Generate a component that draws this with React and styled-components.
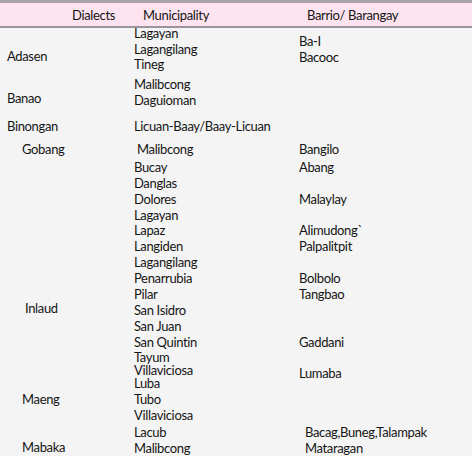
import React from "react";
import styled, { createGlobalStyle } from "styled-components";

const Global = createGlobalStyle`
  html, body { margin: 0; padding: 0; background: #ffffff; }
  body { font-family: Lato, "Open Sans", sans-serif; }
`;

const Table = styled.div`
  width: 472px;
  height: 456px;
  background: #f4f4f4;
  font-family: Lato, "Noto Sans", sans-serif;
  font-size: 13px;
  letter-spacing: -0.35px;
  color: #141414;
  overflow: hidden;
`;

const Header = styled.div`
  display: grid;
  grid-template-columns: 134px 165px 1fr;
  height: 23px;
  align-items: center;
  background: #fde3f0;
  border-top: 3px solid #aaa2aa;
  border-bottom: 2px solid #9a949a;
`;

const HeadCell = styled.div`
  padding-left: ${(p) => p.$pl || 0}px;
  line-height: 16px;
`;

const Group = styled.div`
  display: grid;
  grid-template-columns: 134px 165px 1fr;
  height: ${(p) => p.$h}px;
`;

const Col = styled.div`
  display: flex;
  flex-direction: column;
  margin-top: ${(p) => p.$pt || 0}px;
  padding-left: ${(p) => p.$pl || 0}px;
`;

const Line = styled.div`
  height: ${(p) => p.$lh || 16}px;
  line-height: 16px;
  white-space: nowrap;
  margin-top: ${(p) => p.$mt || 0}px;
`;

const groups = [
  {
    h: 48,
    dialect: { text: "Adasen", pt: 20, pl: 7 },
    muni: { pt: -3, lh: 15.5, items: ["Lagayan", "Lagangilang", "Tineg"] },
    barrio: { pt: 5, items: ["Ba-I", "Bacooc"] },
  },
  {
    h: 42,
    dialect: { text: "Banao", pt: 14, pl: 7 },
    muni: { pt: 0, items: ["Malibcong", "Daguioman"] },
    barrio: { pt: 0, items: [] },
  },
  {
    h: 23,
    dialect: { text: "Binongan", pt: 0, pl: 7 },
    muni: { pt: 0, items: ["Licuan-Baay/Baay-Licuan"] },
    barrio: { pt: 0, items: [] },
  },
  {
    h: 161,
    dialect: { text: "Gobang", pt: 0, pl: 22 },
    muni: {
      pt: 0,
      lh: 15.9,
      items: [
        { t: "Malibcong", indent: 3 },
        { t: "Bucay", mt: 2 },
        "Danglas",
        "Dolores",
        "Lagayan",
        "Lapaz",
        "Langiden",
        "Lagangilang",
        "Penarrubia",
        "Pilar",
      ],
    },
    barrio: {
      pt: 0,
      lh: 15.9,
      items: [
        "Bangilo",
        { t: "Abang", mt: 2 },
        "",
        "Malaylay",
        "",
        "Alimudong`",
        "Palpalitpit",
        "",
        "Bolbolo",
        "Tangbao",
      ],
    },
  },
  {
    h: 73,
    dialect: { text: "Inlaud", pt: -2, pl: 25 },
    muni: {
      pt: 0,
      lh: 15.8,
      items: ["San Isidro", "San Juan", "San Quintin", "Tayum", { t: "Villaviciosa", mt: -3 }],
    },
    barrio: { pt: 32, lh: 31, items: ["Gaddani", "Lumaba"] },
  },
  {
    h: 49,
    dialect: { text: "Maeng", pt: 16, pl: 22 },
    muni: { pt: 0, items: ["Luba", "Tubo", "Villaviciosa"] },
    barrio: { pt: 0, items: [] },
  },
  {
    h: 33,
    dialect: { text: "Mabaka", pt: 15, pl: 22 },
    muni: { pt: 0, lh: 15.5, items: ["Lacub", "Malibcong"] },
    barrio: { pt: 0, pl: 6, lh: 15.5, items: ["Bacag,Buneg,Talampak", "Mataragan"] },
  },
];

function List({ spec }) {
  return (
    <Col $pt={spec.pt} $pl={spec.pl}>
      {spec.items.map((it, i) => {
        const o = typeof it === "string" ? { t: it } : it;
        return (
          <Line key={i} $lh={spec.lh} $mt={o.mt} style={o.indent ? { paddingLeft: o.indent } : undefined}>
            {o.t}
          </Line>
        );
      })}
    </Col>
  );
}

export default function App() {
  return (
    <>
      <Global />
      <Table>
        <Header>
          <HeadCell $pl={72}>Dialects</HeadCell>
          <HeadCell $pl={9}>Municipality</HeadCell>
          <HeadCell $pl={8}>Barrio/ Barangay</HeadCell>
        </Header>
        {groups.map((g, i) => (
          <Group key={i} $h={g.h}>
            <Col $pt={g.dialect.pt} $pl={g.dialect.pl}>
              <Line>{g.dialect.text}</Line>
            </Col>
            <List spec={g.muni} />
            <List spec={g.barrio} />
          </Group>
        ))}
      </Table>
    </>
  );
}
